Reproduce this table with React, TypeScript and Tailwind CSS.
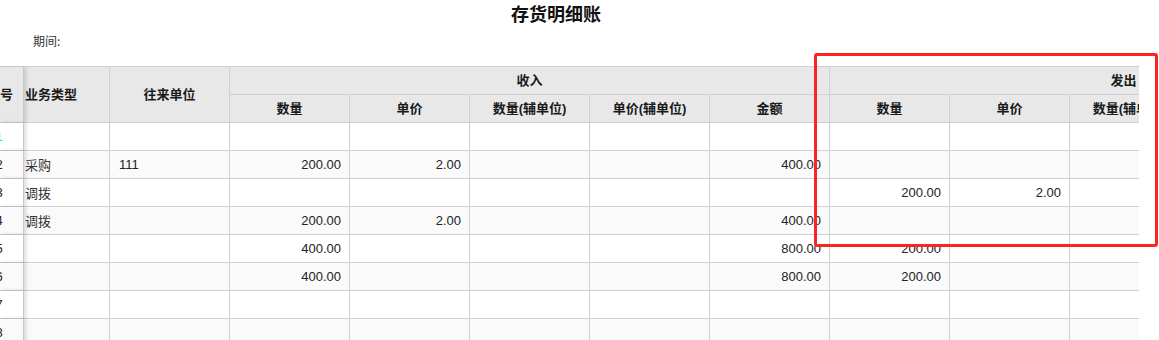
import React from 'react';

type Row = {
  seq: number;
  type: string;
  partner: string;
  inQty: string;
  inPrice: string;
  inAmount: string;
  outQty: string;
  outPrice: string;
};

const rows: Row[] = [
  { seq: 1, type: '', partner: '', inQty: '', inPrice: '', inAmount: '', outQty: '', outPrice: '' },
  { seq: 2, type: '采购', partner: '111', inQty: '200.00', inPrice: '2.00', inAmount: '400.00', outQty: '', outPrice: '' },
  { seq: 3, type: '调拨', partner: '', inQty: '', inPrice: '', inAmount: '', outQty: '200.00', outPrice: '2.00' },
  { seq: 4, type: '调拨', partner: '', inQty: '200.00', inPrice: '2.00', inAmount: '400.00', outQty: '', outPrice: '' },
  { seq: 5, type: '', partner: '', inQty: '400.00', inPrice: '', inAmount: '800.00', outQty: '200.00', outPrice: '' },
  { seq: 6, type: '', partner: '', inQty: '400.00', inPrice: '', inAmount: '800.00', outQty: '200.00', outPrice: '' },
  { seq: 7, type: '', partner: '', inQty: '', inPrice: '', inAmount: '', outQty: '', outPrice: '' },
  { seq: 8, type: '', partner: '', inQty: '', inPrice: '', inAmount: '', outQty: '', outPrice: '' },
];

const subHeaders = ['数量', '单价', '数量(辅单位)', '单价(辅单位)', '金额'];

const cell = 'h-[28px] border-r border-b border-[#d0d0d0] text-[13px] leading-[27px] whitespace-nowrap overflow-hidden';
const head = 'border-r border-b border-[#d0d0d0] bg-[#e8e8e8] text-[13px] font-bold text-[#1a1a1a] whitespace-nowrap overflow-hidden flex items-center';
const seqCell = 'relative z-10 overflow-hidden border-r border-b border-[#c8c8c8] shadow-[2px_0_4px_rgba(0,0,0,0.14)]';

export default function App() {
  return (
    <div className="relative w-[1159px] h-[340px] overflow-hidden bg-white font-['Liberation_Sans','Noto_Sans_CJK_SC',sans-serif] text-[#222]">
      <div className="w-[1112px] h-[26px] text-center text-[18px] leading-[26px] font-bold text-[#111] font-['Noto_Sans_CJK_SC',sans-serif]">
        存货明细账
      </div>
      <div className="mt-[7px] pl-[33px] text-[12px] leading-[16px] text-[#333] font-['Noto_Sans_CJK_SC',sans-serif]">
        期间:
      </div>

      {/* table viewport, scrolled a little to the right */}
      <div className="mt-[17px] w-[1139px] overflow-hidden">
        <div className="grid w-max grid-cols-[24px_86px_repeat(11,120px)] auto-rows-[28px] border-t border-[#d0d0d0]">
          {/* header */}
          <div className={`${seqCell} row-span-2 bg-[#e8e8e8] flex items-center text-[13px] font-bold text-[#1a1a1a]`}>
            <div className="-ml-[23px] w-[46px] shrink-0 text-center">序号</div>
          </div>
          <div className={`${head} row-span-2 pl-[1px]`}>业务类型</div>
          <div className={`${head} row-span-2 justify-center`}>往来单位</div>
          <div className={`${head} col-span-5 justify-center`}>收入</div>
          <div className={`${head} col-span-5 justify-center pr-[12px]`}>发出</div>
          {subHeaders.map((h) => (
            <div key={'in' + h} className={`${head} justify-center`}>{h}</div>
          ))}
          {subHeaders.map((h) => (
            <div key={'out' + h} className={`${head} justify-center`}>{h}</div>
          ))}

          {/* body */}
          {rows.map((r, i) => {
            const bg = i % 2 === 1 ? 'bg-[#fafafa]' : 'bg-white';
            const num = `${cell} ${bg} text-right pr-[8px]`;
            return (
              <React.Fragment key={r.seq}>
                <div className={`${seqCell} ${bg} flex items-center text-[13px]`}>
                  <div className={`-ml-[24px] w-[46px] shrink-0 text-center ${r.seq === 1 ? 'text-[#2ad8f0]' : 'text-[#222]'}`}>
                    {r.seq}
                  </div>
                </div>
                <div className={`${cell} ${bg} pl-[1px] font-['Noto_Sans_CJK_SC',sans-serif] text-[#333]`}>{r.type}</div>
                <div className={`${cell} ${bg} pl-[9px]`}>{r.partner}</div>
                <div className={num}>{r.inQty}</div>
                <div className={num}>{r.inPrice}</div>
                <div className={num}></div>
                <div className={num}></div>
                <div className={num}>{r.inAmount}</div>
                <div className={num}>{r.outQty}</div>
                <div className={num}>{r.outPrice}</div>
                <div className={num}></div>
                <div className={num}></div>
                <div className={num}></div>
              </React.Fragment>
            );
          })}
        </div>
      </div>

      {/* annotation box */}
      <div className="absolute left-[814px] top-[53px] w-[344px] h-[194px] border-[3px] border-[#fb2424] rounded-[3px]" />
    </div>
  );
}
